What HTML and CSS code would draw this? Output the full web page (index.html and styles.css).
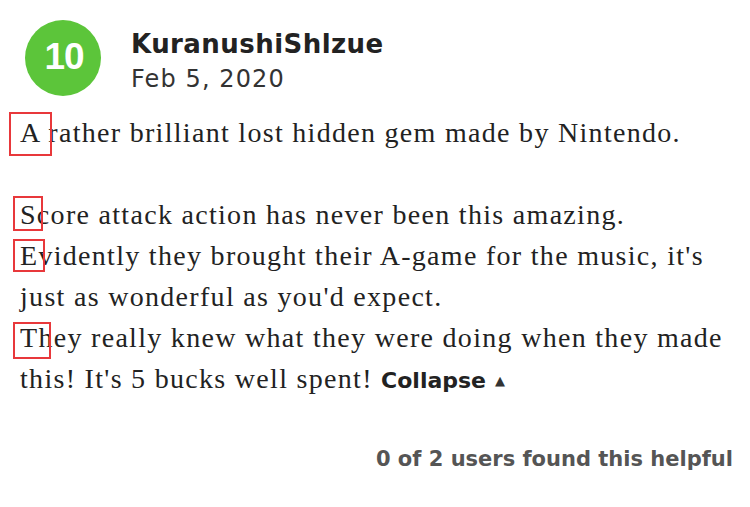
FILE: index.html
```html
<!DOCTYPE html>
<html>
<head>
<meta charset="utf-8">
<link rel="stylesheet" href="styles.css">
</head>
<body>
<div class="review">
  <div class="header">
    <div class="avatar"><span>10</span></div>
    <div class="meta">
      <div class="name">KuranushiShlzue</div>
      <div class="date">Feb 5, 2020</div>
    </div>
  </div>
  <div class="body">
    <p>A rather brilliant lost hidden gem made by Nintendo.</p>
    <p>Score attack action has never been this amazing.<br>Evidently they brought their A-game for the music, it's just as wonderful as you'd expect.<br>They really knew what they were doing when they made this! It's 5 bucks well spent! <span class="collapse">Collapse</span><span class="tri">&#9650;</span></p>
  </div>
  <div class="helpful">0 of 2 users found this helpful</div>
  <div class="mark m1"></div>
  <div class="mark m2"></div>
  <div class="mark m3"></div>
  <div class="mark m4"></div>
</div>
</body>
</html>
```
FILE: styles.css
```css
html, body { margin: 0; padding: 0; background: #fff; }
.review { position: relative; width: 750px; height: 507px; color: #222; overflow: hidden; }
.header { display: flex; align-items: flex-start; padding: 20px 0 0 25px; gap: 30px; height: 92px; box-sizing: border-box; }
.avatar { width: 76px; height: 76px; border-radius: 50%; background: #5cc53a; display: flex; align-items: center; justify-content: center; }
.avatar span { color: #fff; font-family: "Liberation Sans", sans-serif; font-weight: bold; font-size: 37px; letter-spacing: -1px; margin: -2px 0 0 2px; }
.meta { padding-top: 8px; }
.name { font-family: "DejaVu Sans", sans-serif; font-weight: bold; font-size: 26px; line-height: 32px; color: #222; letter-spacing: 0.45px; }
.date { font-family: "DejaVu Sans", sans-serif; font-size: 24px; line-height: 34px; color: #333; margin-top: 2px; letter-spacing: 1.1px; }
.body { padding: 20px 0 0 20px; font-family: "Liberation Serif", serif; font-size: 28px; line-height: 41px; letter-spacing: 1.3px; color: #222; }
.body p { margin: 0 0 41px 0; }
.body p:last-child { margin-bottom: 0; }
.collapse { font-family: "DejaVu Sans", sans-serif; font-weight: bold; font-size: 22px; letter-spacing: 0; }
.tri { font-family: "DejaVu Sans", sans-serif; font-size: 13px; vertical-align: 3px; color: #333; margin-left: 9px; letter-spacing: 0; }
.helpful { text-align: right; padding: 46px 17px 0 0; font-family: "DejaVu Sans", sans-serif; font-weight: bold; font-size: 21px; line-height: 25px; color: #555; }
.mark { position: absolute; border: 2px solid #e8383b; box-sizing: border-box; }
.m1 { left: 9px; top: 112px; width: 43px; height: 44px; }
.m2 { left: 13px; top: 196px; width: 30px; height: 35px; }
.m3 { left: 13px; top: 239px; width: 32px; height: 33px; }
.m4 { left: 13px; top: 322px; width: 38px; height: 37px; }
```
